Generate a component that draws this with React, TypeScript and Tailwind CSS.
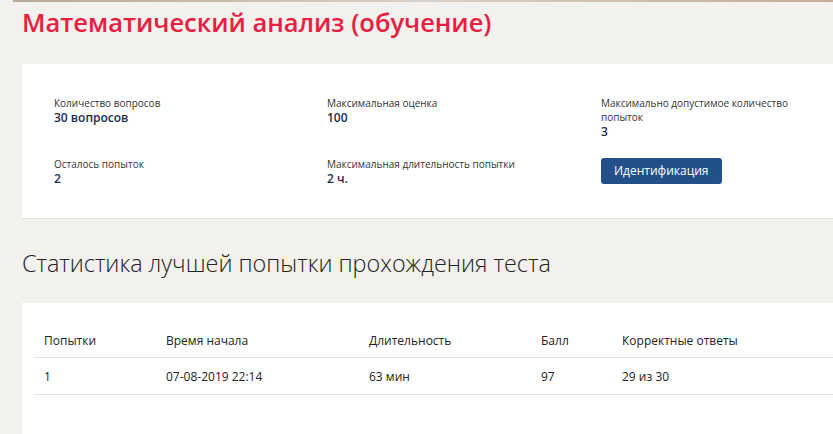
import React from 'react';

const infoItems = [
  { label: 'Количество вопросов', value: '30 вопросов' },
  { label: 'Максимальная оценка', value: '100' },
  { label: 'Максимально допустимое количество попыток', value: '3' },
];

const rows = [
  { attempt: '1', start: '07-08-2019 22:14', duration: '63 мин', score: '97', correct: '29 из 30' },
];

function Info({ label, value }: { label: string; value: string }) {
  return (
    <div className="flex flex-col">
      <span className="text-[10px] leading-[14px] text-[#333]">{label}</span>
      <span className="text-[12px] leading-[16px] font-semibold text-[#182b4f]">{value}</span>
    </div>
  );
}

export default function App() {
  return (
    <div className="min-h-[434px] bg-[#f2f1ee] font-['Open_Sans',sans-serif] overflow-hidden">
      <div className="ml-[13px] h-[2px] bg-gradient-to-r from-[#b9a896] via-[#d8d1c9] to-[#c2ad98]" />
      <h1 className="ml-[22px] mt-[1px] text-[25.5px] leading-[38px] font-semibold text-[#e7203f]">
        Математический анализ (обучение)
      </h1>

      <div className="ml-[22px] mt-[23px] bg-white border-b border-[#e2e1dd] pl-[32px] pt-[32px] pb-[31px] w-[830px]">
        <div className="grid grid-cols-[273px_274px_230px] gap-y-[17px]">
          {infoItems.map((it) => (
            <Info key={it.label} label={it.label} value={it.value} />
          ))}
          <Info label="Осталось попыток" value="2" />
          <Info label="Максимальная длительность попытки" value="2 ч." />
          <div>
            <button className="mt-[1px] bg-[#235089] text-white text-[12px] leading-[26px] px-[13px] rounded-[3px]">
              Идентификация
            </button>
          </div>
        </div>
      </div>

      <h2 className="ml-[22px] mt-[28px] text-[23.4px] leading-[32px] font-light text-[#222]">
        Статистика лучшей попытки прохождения теста
      </h2>

      <div className="ml-[22px] mt-[24px] bg-white pl-[12px] pt-[22px] pb-[40px] w-[830px]">
        <table className="w-full text-left text-[12px] leading-[16px] text-[#222]">
          <thead>
            <tr className="border-b border-[#e2e1dd]">
              <th className="font-medium py-[8px] pl-[10px] w-[132px]">Попытки</th>
              <th className="font-medium py-[8px] w-[203px]">Время начала</th>
              <th className="font-medium py-[8px] w-[172px]">Длительность</th>
              <th className="font-medium py-[8px] w-[81px]">Балл</th>
              <th className="font-medium py-[8px]">Корректные ответы</th>
            </tr>
          </thead>
          <tbody>
            {rows.map((r) => (
              <tr key={r.attempt} className="border-b border-[#e2e1dd]">
                <td className="pt-[11px] pb-[9px] pl-[10px]">{r.attempt}</td>
                <td className="pt-[11px] pb-[9px]">{r.start}</td>
                <td className="pt-[11px] pb-[9px]">{r.duration}</td>
                <td className="pt-[11px] pb-[9px]">{r.score}</td>
                <td className="pt-[11px] pb-[9px]">{r.correct}</td>
              </tr>
            ))}
          </tbody>
        </table>
      </div>
    </div>
  );
}
